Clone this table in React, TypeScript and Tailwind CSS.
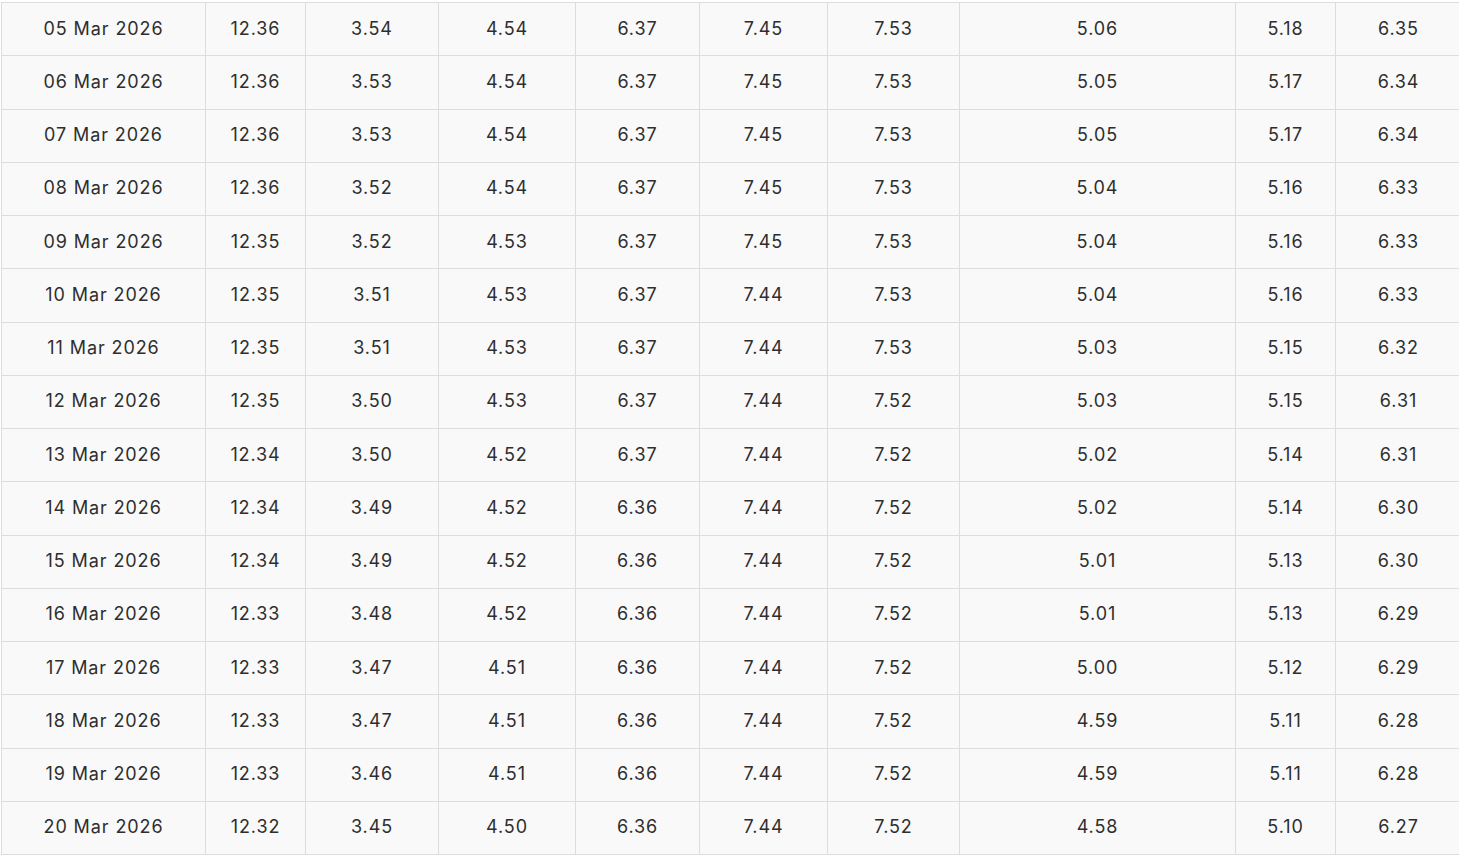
import React from "react";

const rows: string[][] = [
  ["05 Mar 2026", "12.36", "3.54", "4.54", "6.37", "7.45", "7.53", "5.06", "5.18", "6.35"],
  ["06 Mar 2026", "12.36", "3.53", "4.54", "6.37", "7.45", "7.53", "5.05", "5.17", "6.34"],
  ["07 Mar 2026", "12.36", "3.53", "4.54", "6.37", "7.45", "7.53", "5.05", "5.17", "6.34"],
  ["08 Mar 2026", "12.36", "3.52", "4.54", "6.37", "7.45", "7.53", "5.04", "5.16", "6.33"],
  ["09 Mar 2026", "12.35", "3.52", "4.53", "6.37", "7.45", "7.53", "5.04", "5.16", "6.33"],
  ["10 Mar 2026", "12.35", "3.51", "4.53", "6.37", "7.44", "7.53", "5.04", "5.16", "6.33"],
  ["11 Mar 2026", "12.35", "3.51", "4.53", "6.37", "7.44", "7.53", "5.03", "5.15", "6.32"],
  ["12 Mar 2026", "12.35", "3.50", "4.53", "6.37", "7.44", "7.52", "5.03", "5.15", "6.31"],
  ["13 Mar 2026", "12.34", "3.50", "4.52", "6.37", "7.44", "7.52", "5.02", "5.14", "6.31"],
  ["14 Mar 2026", "12.34", "3.49", "4.52", "6.36", "7.44", "7.52", "5.02", "5.14", "6.30"],
  ["15 Mar 2026", "12.34", "3.49", "4.52", "6.36", "7.44", "7.52", "5.01", "5.13", "6.30"],
  ["16 Mar 2026", "12.33", "3.48", "4.52", "6.36", "7.44", "7.52", "5.01", "5.13", "6.29"],
  ["17 Mar 2026", "12.33", "3.47", "4.51", "6.36", "7.44", "7.52", "5.00", "5.12", "6.29"],
  ["18 Mar 2026", "12.33", "3.47", "4.51", "6.36", "7.44", "7.52", "4.59", "5.11", "6.28"],
  ["19 Mar 2026", "12.33", "3.46", "4.51", "6.36", "7.44", "7.52", "4.59", "5.11", "6.28"],
  ["20 Mar 2026", "12.32", "3.45", "4.50", "6.36", "7.44", "7.52", "4.58", "5.10", "6.27"],
];

const widths = [204, 100, 133, 137, 124, 128, 132, 276, 100, 126];

export default function App() {
  return (
    <div className="w-[1459px] h-[857px] overflow-hidden bg-white pt-[2px] pl-[1px]">
      <table
        className="w-[1460px] border-collapse table-fixed bg-[#f9f9f9] text-[#2e2e2e] text-[18px] tracking-[0.9px]"
        style={{ fontFamily: "Inter, 'Noto Sans', sans-serif" }}
      >
        <colgroup>
          {widths.map((w, i) => (
            <col key={i} style={{ width: w }} />
          ))}
        </colgroup>
        <tbody>
          {rows.map((r, i) => (
            <tr key={i} className="h-[53.25px]">
              {r.map((c, j) => (
                <td key={j} className="border border-[#dddddd] text-center align-middle p-0 pb-[2px]">
                  {c}
                </td>
              ))}
            </tr>
          ))}
        </tbody>
      </table>
    </div>
  );
}
